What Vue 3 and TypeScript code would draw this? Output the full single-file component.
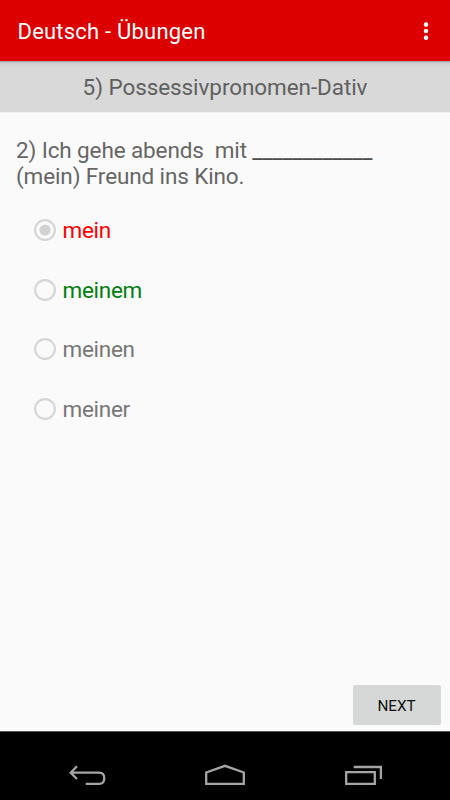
<script setup lang="ts">
import { ref } from 'vue'
interface Option { label: string; tone: string }
const options: Option[] = [
  { label: 'mein', tone: 'wrong' },
  { label: 'meinem', tone: 'right' },
  { label: 'meinen', tone: '' },
  { label: 'meiner', tone: '' },
]
const selected = ref(0)
</script>

<template>
  <div class="screen">
    <header class="bar">
      <h1>Deutsch - Übungen</h1>
      <svg class="more" viewBox="0 0 6 20"><circle cx="3" cy="3.4" r="2.25" /><circle cx="3" cy="10.1" r="2.25" /><circle cx="3" cy="16.7" r="2.25" /></svg>
    </header>
    <div class="topic"><span>5) Possessivpronomen-Dativ</span></div>
    <main>
      <p class="question"><span class="line">2) Ich gehe abends&nbsp; mit <span class="blank">____________</span></span><span class="line">(mein) Freund ins Kino.</span></p>
      <ul>
        <li v-for="(o, i) in options" :key="o.label" :class="o.tone" @click="selected = i">
          <svg class="radio" viewBox="0 0 22 22"><circle class="ring" cx="11" cy="11" r="9.9" /><circle v-if="selected === i" class="dot" cx="11" cy="11" r="5.6" /></svg>
          <span>{{ o.label }}</span>
        </li>
      </ul>
      <button class="next">NEXT</button>
    </main>
    <nav>
      <svg viewBox="0 0 450 69">
        <path d="M77 35.3 70.7 41.7 77 48M71 41.7H99Q104.3 41.7 104.3 47.3T99 52.8H85.7" />
        <path d="M206.2 41.5 225 34.8 243.8 41.5V52.8H206.2Z" />
        <path d="M346.2 41.2H374.8V52.8H346.2ZM353.7 36H380.9V48" />
      </svg>
    </nav>
  </div>
</template>

<style>
body { margin: 0; }
</style>
<style scoped>
.screen { width: 450px; height: 800px; display: flex; flex-direction: column; background: #fafafa; font-family: Roboto, sans-serif; overflow: hidden; }
.bar { height: 61px; flex: none; background: #dd0000; display: flex; align-items: center; justify-content: space-between; padding: 0 21px 0 17.5px; box-sizing: border-box; }
h1 { margin: 0; padding-top: 2px; font-size: 22px; font-weight: 400; letter-spacing: 0.21px; color: #fff; }
.more { width: 6px; height: 20px; fill: #fff; }
.topic { height: 51px; flex: none; background: linear-gradient(#8c8c8c 0, #bcbcbc 1px, #cbcbcb 2px, #d3d3d3 4px, #d9d9d9 8px); border-bottom: 1px solid #f0f0f0; box-sizing: content-box; display: flex; align-items: center; justify-content: center; font-size: 22.5px; letter-spacing: -0.08px; color: #606060; }
main { flex: 1; display: flex; flex-direction: column; padding: 24px 9.5px 6px 16px; }
.question { margin: 0; font-size: 22.5px; line-height: 26px; letter-spacing: -0.12px; color: #666; }
.line { display: block; white-space: nowrap; }
.blank { color: #4c4c4c; letter-spacing: -0.17px; }
ul { list-style: none; margin: 11px 0 0; padding: 0 0 0 18px; }
li { height: 59.7px; display: flex; align-items: center; gap: 6.5px; font-size: 22.5px; letter-spacing: -0.28px; color: #777; }
.wrong { color: #ff0000; }
.right { color: #008010; }
.radio { width: 22px; height: 22px; }
.ring { fill: none; stroke: #d6d6d6; stroke-width: 2.1; }
.dot { fill: #d2d2d2; }
.next { margin: auto 0 0 auto; padding: 1px 0 0; width: 88px; height: 40px; border: 0; border-radius: 2px; background: #d6d8d7; color: #111; font: 15.3px Roboto, sans-serif; letter-spacing: -0.1px; }
nav { height: 69px; flex: none; background: linear-gradient(#555 0, #555 1px, #000 1px); }
nav svg { display: block; width: 450px; height: 69px; fill: none; stroke: #a5a5a5; stroke-width: 2.3; }
</style>
